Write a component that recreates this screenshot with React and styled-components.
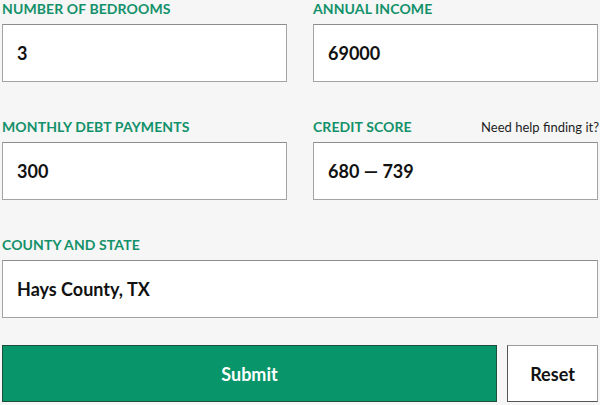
import React from "react";
import styled, { createGlobalStyle } from "styled-components";

const GlobalStyle = createGlobalStyle`
  body {
    margin: 0;
    background: #f6f6f6;
    font-family: "Lato", "Open Sans", sans-serif;
  }
`;

const Form = styled.form`
  width: 596px;
  margin-left: 2px;
  display: flex;
  flex-direction: column;
`;

const Grid = styled.div`
  display: grid;
  grid-template-columns: 285px 285px;
  column-gap: 26px;
  row-gap: 36px;
`;

const Field = styled.div`
  display: flex;
  flex-direction: column;
  gap: 6px;
  grid-column: ${(p) => (p.wide ? "1 / -1" : "auto")};
`;

const LabelRow = styled.div`
  display: flex;
  justify-content: space-between;
  align-items: baseline;
  height: 18px;
  line-height: 18px;
`;

const Label = styled.label`
  font-size: 14px;
  font-weight: 700;
  color: #12916a;
  letter-spacing: 0.1px;
`;

const Help = styled.span`
  font-size: 13px;
  color: #1e1e1e;
  margin-right: -1px;
`;

const Input = styled.input`
  box-sizing: border-box;
  height: 58px;
  width: 100%;
  padding: 0 14px;
  border: 1px solid #a3a3a3;
  border-top-color: #8c8c8c;
  background: #fff;
  font-family: inherit;
  font-size: 18px;
  font-weight: 700;
  color: #111;
  outline: none;
`;

const Buttons = styled.div`
  display: flex;
  gap: 10px;
  margin-top: 27px;
`;

const Button = styled.button`
  box-sizing: border-box;
  height: 57px;
  font-family: inherit;
  font-size: 18px;
  font-weight: 700;
  cursor: pointer;
  flex: ${(p) => (p.primary ? 1 : "0 0 91px")};
  background: ${(p) => (p.primary ? "#08956a" : "#fff")};
  color: ${(p) => (p.primary ? "#fff" : "#111")};
  border: 1px solid ${(p) => (p.primary ? "#1d4d3b" : "#555")};
  border-top-color: ${(p) => (p.primary ? "#1d4d3b" : "#999")};
  border-right-color: ${(p) => (p.primary ? "#1d4d3b" : "#999")};
`;

const App = () => {
  return (
    <>
      <GlobalStyle />
      <Form onSubmit={(e) => e.preventDefault()}>
        <Grid>
          <Field>
            <LabelRow>
              <Label>NUMBER OF BEDROOMS</Label>
            </LabelRow>
            <Input defaultValue="3" />
          </Field>
          <Field>
            <LabelRow>
              <Label>ANNUAL INCOME</Label>
            </LabelRow>
            <Input defaultValue="69000" />
          </Field>
          <Field>
            <LabelRow>
              <Label>MONTHLY DEBT PAYMENTS</Label>
            </LabelRow>
            <Input defaultValue="300" />
          </Field>
          <Field>
            <LabelRow>
              <Label>CREDIT SCORE</Label>
              <Help>Need help finding it?</Help>
            </LabelRow>
            <Input defaultValue="680 — 739" />
          </Field>
          <Field wide>
            <LabelRow>
              <Label>COUNTY AND STATE</Label>
            </LabelRow>
            <Input defaultValue="Hays County, TX" />
          </Field>
        </Grid>
        <Buttons>
          <Button primary type="submit">Submit</Button>
          <Button type="reset">Reset</Button>
        </Buttons>
      </Form>
    </>
  );
};

export default App;
